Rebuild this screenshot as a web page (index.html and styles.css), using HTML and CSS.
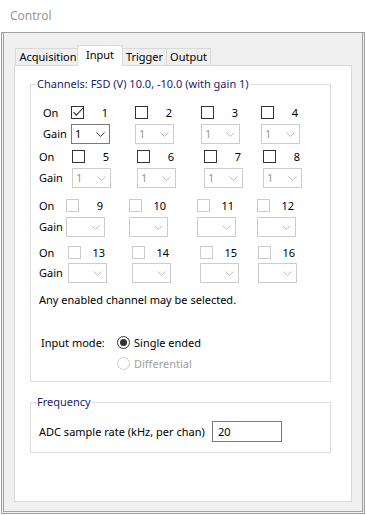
FILE: index.html
```html
<!DOCTYPE html>
<html lang="en">

<head>
    <meta charset="UTF-8">
    <title>Control</title>
    <link rel="stylesheet" href="styles.css">
</head>

<body>
    <div class="window">
        <div class="titlebar">Control</div>

        <div class="frame">
            <div class="client">

                <!-- Tab strip -->
                <div class="tabs">
                    <div class="tab tab-acq">Acquisition</div>
                    <div class="tab tab-input active">Input</div>
                    <div class="tab tab-trig">Trigger</div>
                    <div class="tab tab-out">Output</div>
                </div>

                <div class="panel">
                    <fieldset class="group channels">
                        <legend>Channels: FSD (V) 10.0, -10.0 (with gain 1)</legend>

                        <!-- Channels 1 - 4 -->
                        <div class="block b1">
                            <span class="lbl">On</span>
                            <div class="chan"><svg class="cb" width="13" height="13"><rect x="0.5" y="0.5" width="12" height="12"/><polyline points="2.5,6.2 5.3,9.2 12,2"/></svg><span class="num">1</span></div>
                            <div class="chan"><svg class="cb" width="13" height="13"><rect x="0.5" y="0.5" width="12" height="12"/></svg><span class="num">2</span></div>
                            <div class="chan"><svg class="cb" width="13" height="13"><rect x="0.5" y="0.5" width="12" height="12"/></svg><span class="num">3</span></div>
                            <div class="chan"><svg class="cb" width="13" height="13"><rect x="0.5" y="0.5" width="12" height="12"/></svg><span class="num">4</span></div>
                            <span class="lbl">Gain</span>
                            <div class="combo"><span>1</span><svg width="9" height="5"><polyline points="0.5,0.5 4.5,4.5 8.5,0.5"/></svg></div>
                            <div class="combo off"><span>1</span><svg width="9" height="5"><polyline points="0.5,0.5 4.5,4.5 8.5,0.5"/></svg></div>
                            <div class="combo off"><span>1</span><svg width="9" height="5"><polyline points="0.5,0.5 4.5,4.5 8.5,0.5"/></svg></div>
                            <div class="combo off"><span>1</span><svg width="9" height="5"><polyline points="0.5,0.5 4.5,4.5 8.5,0.5"/></svg></div>
                        </div>

                        <!-- Channels 5 - 8 -->
                        <div class="block b2">
                            <span class="lbl">On</span>
                            <div class="chan"><svg class="cb" width="13" height="13"><rect x="0.5" y="0.5" width="12" height="12"/></svg><span class="num">5</span></div>
                            <div class="chan"><svg class="cb" width="13" height="13"><rect x="0.5" y="0.5" width="12" height="12"/></svg><span class="num">6</span></div>
                            <div class="chan"><svg class="cb" width="13" height="13"><rect x="0.5" y="0.5" width="12" height="12"/></svg><span class="num">7</span></div>
                            <div class="chan"><svg class="cb" width="13" height="13"><rect x="0.5" y="0.5" width="12" height="12"/></svg><span class="num">8</span></div>
                            <span class="lbl">Gain</span>
                            <div class="combo off"><span>1</span><svg width="9" height="5"><polyline points="0.5,0.5 4.5,4.5 8.5,0.5"/></svg></div>
                            <div class="combo off"><span>1</span><svg width="9" height="5"><polyline points="0.5,0.5 4.5,4.5 8.5,0.5"/></svg></div>
                            <div class="combo off"><span>1</span><svg width="9" height="5"><polyline points="0.5,0.5 4.5,4.5 8.5,0.5"/></svg></div>
                            <div class="combo off"><span>1</span><svg width="9" height="5"><polyline points="0.5,0.5 4.5,4.5 8.5,0.5"/></svg></div>
                        </div>

                        <!-- Channels 9 - 12 -->
                        <div class="block b3">
                            <span class="lbl">On</span>
                            <div class="chan"><svg class="cb off" width="13" height="13"><rect x="0.5" y="0.5" width="12" height="12"/></svg><span class="num">9</span></div>
                            <div class="chan"><svg class="cb off" width="13" height="13"><rect x="0.5" y="0.5" width="12" height="12"/></svg><span class="num">10</span></div>
                            <div class="chan"><svg class="cb off" width="13" height="13"><rect x="0.5" y="0.5" width="12" height="12"/></svg><span class="num">11</span></div>
                            <div class="chan"><svg class="cb off" width="13" height="13"><rect x="0.5" y="0.5" width="12" height="12"/></svg><span class="num">12</span></div>
                            <span class="lbl">Gain</span>
                            <div class="combo off"><span></span><svg width="9" height="5"><polyline points="0.5,0.5 4.5,4.5 8.5,0.5"/></svg></div>
                            <div class="combo off"><span></span><svg width="9" height="5"><polyline points="0.5,0.5 4.5,4.5 8.5,0.5"/></svg></div>
                            <div class="combo off"><span></span><svg width="9" height="5"><polyline points="0.5,0.5 4.5,4.5 8.5,0.5"/></svg></div>
                            <div class="combo off"><span></span><svg width="9" height="5"><polyline points="0.5,0.5 4.5,4.5 8.5,0.5"/></svg></div>
                        </div>

                        <!-- Channels 13 - 16 -->
                        <div class="block b4">
                            <span class="lbl">On</span>
                            <div class="chan"><svg class="cb off" width="13" height="13"><rect x="0.5" y="0.5" width="12" height="12"/></svg><span class="num">13</span></div>
                            <div class="chan"><svg class="cb off" width="13" height="13"><rect x="0.5" y="0.5" width="12" height="12"/></svg><span class="num">14</span></div>
                            <div class="chan"><svg class="cb off" width="13" height="13"><rect x="0.5" y="0.5" width="12" height="12"/></svg><span class="num">15</span></div>
                            <div class="chan"><svg class="cb off" width="13" height="13"><rect x="0.5" y="0.5" width="12" height="12"/></svg><span class="num">16</span></div>
                            <span class="lbl">Gain</span>
                            <div class="combo off"><span></span><svg width="9" height="5"><polyline points="0.5,0.5 4.5,4.5 8.5,0.5"/></svg></div>
                            <div class="combo off"><span></span><svg width="9" height="5"><polyline points="0.5,0.5 4.5,4.5 8.5,0.5"/></svg></div>
                            <div class="combo off"><span></span><svg width="9" height="5"><polyline points="0.5,0.5 4.5,4.5 8.5,0.5"/></svg></div>
                            <div class="combo off"><span></span><svg width="9" height="5"><polyline points="0.5,0.5 4.5,4.5 8.5,0.5"/></svg></div>
                        </div>

                        <p class="note">Any enabled channel may be selected.</p>

                        <!-- Input mode -->
                        <div class="mode">
                            <span class="mode-lbl">Input mode:</span>
                            <div class="radio"><svg class="rb" width="13" height="13"><circle cx="6.5" cy="6.5" r="6"/><circle class="dot" cx="6.5" cy="6.5" r="3.5"/></svg><span>Single ended</span></div>
                            <span></span>
                            <div class="radio off"><svg class="rb" width="13" height="13"><circle cx="6.5" cy="6.5" r="6"/></svg><span>Differential</span></div>
                        </div>
                    </fieldset>

                    <fieldset class="group frequency">
                        <legend>Frequency</legend>
                        <div class="freq-row">
                            <span class="freq-lbl">ADC sample rate (kHz, per chan)</span>
                            <div class="textbox">20</div>
                        </div>
                    </fieldset>
                </div>

            </div>
        </div>
    </div>
</body>

</html>
```

FILE: styles.css
```css
/* General Reset */
* {
    margin: 0;
    padding: 0;
    box-sizing: border-box;
}

body {
    font-family: "Noto Sans", "DejaVu Sans", sans-serif;
    font-size: 11px;
    color: #000;
    background: #fff;
}

/* Window chrome */
.window {
    width: 366px;
    height: 515px;
    background: #fff;
}

.titlebar {
    height: 32px;
    padding-left: 10px;
    line-height: 31px;
    font-size: 12px;
    color: #999;
}

.frame {
    margin-left: 1px;
    width: 364px;
    height: 482px;
    border: 1px solid #a0a0a0;
    padding: 0 1px 1px;
    background: #f0f0f0;
}

.client {
    height: 479px;
    border: 1px solid #a0a0a0;
    border-top: none;
    padding: 12px 0 0 10px;
}

/* Tabs */
.tabs {
    display: flex;
    align-items: flex-end;
    height: 20px;
    padding-left: 1px;
}

.tab {
    height: 17px;
    line-height: 16px;
    text-align: center;
    border: 1px solid #d9d9d9;
    border-bottom: none;
    background: #f0f0f0;
    margin-left: -1px;
}

.tab-acq {
    width: 63px;
    margin-left: 0;
    padding-left: 3px;
}

.tab-input {
    width: 46px;
}

.tab-trig {
    width: 45px;
}

.tab-out {
    width: 45px;
}

.tab.active {
    height: 21px;
    line-height: 17px;
    margin-bottom: -1px;
    background: #fff;
    position: relative;
    z-index: 1;
}

.panel {
    width: 338px;
    height: 437px;
    background: #fff;
    border: 1px solid #d9d9d9;
    padding: 10px 0 0 15px;
}

/* Group boxes */
.group {
    width: 301px;
    border: 1px solid #dcdcdc;
    padding: 0;
}

.group legend {
    margin-left: 5px;
    padding: 0 1px;
    line-height: 16px;
    color: #1b2470;
}

/* Channel blocks */
.block {
    display: grid;
    grid-template-rows: 13px 20px;
    align-items: center;
    justify-items: start;
    padding-left: 8px;
}

.b1 {
    grid-template-columns: 28px 64px 66px 60px 39px;
    row-gap: 5px;
    margin-top: 14px;
    padding-left: 12px;
}

.b2 {
    grid-template-columns: 33px 65px 67px 59px 39px;
    row-gap: 5px;
    margin-top: 6px;
}

.b3 {
    grid-template-columns: 27px 63px 68px 60px 39px;
    row-gap: 5px;
    margin-top: 11px;
}

.b4 {
    grid-template-columns: 29px 64px 68px 58px 39px;
    row-gap: 4px;
    margin-top: 9px;
}

.lbl {
    line-height: 16px;
}

.chan {
    width: 37px;
    display: flex;
    justify-content: space-between;
    align-items: center;
    height: 13px;
}

.num {
    line-height: 16px;
}

.cb {
    display: block;
    fill: #fff;
    stroke: #333;
}

.cb polyline {
    fill: none;
    stroke: #333;
    stroke-width: 1.1;
}

.cb.off {
    stroke: #cccccc;
}

.combo {
    width: 39px;
    height: 20px;
    border: 1px solid #7a7a7a;
    display: flex;
    align-items: center;
    justify-content: space-between;
    padding: 0 4px 0 3px;
    line-height: 16px;
}

.combo svg {
    display: block;
    fill: none;
    stroke: #333;
}

.combo.off {
    border-color: #cccccc;
    color: #9a9a9a;
}

.combo.off svg {
    stroke: #bdbdbd;
}

.note {
    margin-top: 9px;
    padding-left: 8px;
    line-height: 16px;
}

/* Input mode radios */
.mode {
    display: grid;
    grid-template-columns: 76px auto;
    grid-template-rows: 21px 21px;
    align-items: center;
    margin-top: 24px;
    padding: 0 0 7px 10px;
}

.radio {
    display: flex;
    align-items: center;
    gap: 4px;
    line-height: 16px;
}

.rb {
    display: block;
    fill: #fff;
    stroke: #333;
}

.rb .dot {
    fill: #333;
    stroke: none;
}

.radio.off {
    color: #a0a0a0;
}

.radio.off .rb {
    stroke: #cccccc;
}

/* Frequency */
.frequency {
    margin-top: 12px;
}

.freq-row {
    display: flex;
    align-items: center;
    margin-top: 11px;
    padding: 0 0 10px 8px;
}

.freq-lbl {
    width: 173px;
    line-height: 16px;
    white-space: nowrap;
}

.textbox {
    width: 70px;
    height: 21px;
    border: 1px solid #7a7a7a;
    padding-left: 5px;
    line-height: 19px;
}
```
